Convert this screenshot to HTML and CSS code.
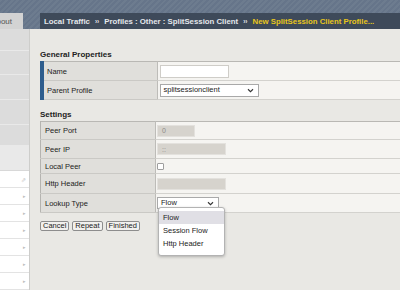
FILE: index.html
```html
<!DOCTYPE html>
<html lang="en">
  <head>
    <meta charset="UTF-8" />
    <title>New SplitSession Client Profile</title>
    <link rel="stylesheet" href="styles.css">
  </head>
  <body>
    <!-- top bar: nav tab + breadcrumb -->
    <div class="top">
      <div class="tab-about"><span>About</span></div>
      <div class="crumbs">
        <span>Local Traffic</span><span class="sep">&rsaquo;&rsaquo;</span><span>Profiles : Other : SplitSession Client</span><span class="sep">&rsaquo;&rsaquo;</span><span class="current">New SplitSession Client Profile...</span>
      </div>
    </div>

    <div class="main">
      <!-- left menu -->
      <div class="side">
        <div class="blk h23"></div>
        <div class="blk h25"></div>
        <div class="blk h26"></div>
        <div class="blk h25"></div>
        <div class="blk h22"></div>
        <div class="blk light"></div>
        <ul class="menu">
          <li><span class="ext">&#8663;</span></li>
          <li><span>&#9656;</span></li>
          <li><span>&#9656;</span></li>
          <li><span>&#9656;</span></li>
          <li><span>&#9656;</span></li>
          <li><span>&#9656;</span></li>
          <li><span>&#9656;</span></li>
        </ul>
      </div>

      <!-- form -->
      <div class="content">
        <h3>General Properties</h3>
        <table class="props general">
          <tr>
            <th>Name</th>
            <td><span class="txt name"></span></td>
          </tr>
          <tr>
            <th>Parent Profile</th>
            <td>
              <span class="sel parent">splitsessionclient
                <svg viewBox="0 0 8 6" width="7" height="5"><path d="M1 1.5 L4 4.5 L7 1.5" fill="none" stroke="#333" stroke-width="1.3"/></svg>
              </span>
            </td>
          </tr>
        </table>

        <h3 class="second">Settings</h3>
        <table class="props settings">
          <tr class="r18">
            <th>Peer Port</th>
            <td><span class="txt off short">0</span></td>
          </tr>
          <tr class="r19">
            <th>Peer IP</th>
            <td><span class="txt off">::</span></td>
          </tr>
          <tr class="r15">
            <th>Local Peer</th>
            <td><span class="check"></span></td>
          </tr>
          <tr class="r20">
            <th>Http Header</th>
            <td><span class="txt off"></span></td>
          </tr>
          <tr class="r19">
            <th>Lookup Type</th>
            <td>
              <div class="pick">
                <span class="sel lookup">Flow
                  <svg viewBox="0 0 8 6" width="7" height="5"><path d="M1 1.5 L4 4.5 L7 1.5" fill="none" stroke="#333" stroke-width="1.3"/></svg>
                </span>
                <ul class="drop">
                  <li class="on">Flow</li>
                  <li>Session Flow</li>
                  <li>Http Header</li>
                </ul>
              </div>
            </td>
          </tr>
        </table>

        <div class="buttons">
          <button>Cancel</button>
          <button>Repeat</button>
          <button>Finished</button>
        </div>
      </div>
    </div>
  </body>
</html>
```

FILE: styles.css
```css
/* reset */
* {
  margin: 0;
  padding: 0;
  box-sizing: border-box;
}

body {
  width: 400px;
  height: 290px;
  overflow: hidden;
  font-family: "Liberation Sans", Arial, sans-serif;
  font-size: 7.5px;
  color: #222;
  background-color: #e9e8e4;
}

ul {
  list-style-type: none;
}

/* top bar */
.top {
  height: 29px;
  padding-top: 13px;
  display: flex;
  background: repeating-linear-gradient(135deg, #6d7c8f 0 2px, #66758a 2px 4px);
}
.tab-about {
  width: 23px;
  height: 16px;
  padding-right: 11px;
  display: flex;
  align-items: center;
  justify-content: flex-end;
  overflow: hidden;
  background-color: #d3d3d3;
  color: #555;
  font-size: 8px;
  white-space: nowrap;
}
.crumbs {
  flex: 1;
  margin-left: 17px;
  height: 16px;
  padding-left: 4px;
  display: flex;
  align-items: center;
  white-space: nowrap;
  background-color: #3e4a5a;
  color: #e4e7eb;
  font-weight: bold;
  font-size: 7.8px;
}
.crumbs .sep {
  font-size: 6.5px;
  margin: 0 5px;
}
.crumbs .current {
  color: #e8c61c;
}

/* main area */
.main {
  display: flex;
  height: 261px;
}

/* left menu */
.side {
  width: 30px;
  border-right: 1px solid #cdcdcb;
  display: flex;
  flex-direction: column;
}
.blk {
  background-color: #dcdcdc;
  border-bottom: 1px solid #e9e9e9;
}
.h23 { height: 23px; }
.h25 { height: 25px; }
.h26 { height: 26px; }
.h22 { height: 22px; }
.blk.light {
  height: 26px;
  background-color: #e9e9e9;
  border-bottom: 1px solid #d8d8d8;
}
.menu {
  flex: 1;
  background-color: #fff;
}
.menu li {
  height: 17px;
  border-bottom: 1px solid #e3e3e3;
  display: flex;
  align-items: center;
  justify-content: flex-end;
  padding-right: 3px;
  color: #bdbdbd;
  font-size: 5px;
}
.menu li .ext {
  font-size: 6px;
}

/* form */
.content {
  flex: 1;
  padding: 21px 0 0 10px;
}
h3 {
  font-size: 8px;
  height: 10px;
  line-height: 10px;
  margin-bottom: 1px;
  color: #222;
}
h3.second {
  margin-top: 10px;
}

.props {
  width: 100%;
  border-collapse: collapse;
  border-top: 1px solid #b9b8b4;
  border-bottom: 1px solid #b9b8b4;
}
.props tr {
  height: 19px;
}
.props th {
  text-align: left;
  font-weight: normal;
  background-color: #e0dfdb;
  border-bottom: 1px solid #cac9c5;
  border-right: 1px solid #bdbcb8;
  color: #222;
}
.props td {
  background-color: #f5f4f1;
  border-bottom: 1px solid #d3d2ce;
  padding-left: 2px;
  line-height: 1;
}

.general th {
  width: 115px;
  border-left: 4px solid #2e5d8d;
  padding-left: 3px;
}
.settings th {
  width: 115px;
  border-left: 1px solid #b5b4b0;
  padding-left: 4px;
}
.settings td {
  padding-left: 1px;
}
.r18 { height: 18px !important; }
.r15 { height: 15px !important; }
.r20 { height: 20px !important; }

/* inputs */
.txt {
  display: inline-flex;
  align-items: center;
  vertical-align: middle;
  width: 69px;
  height: 13px;
  padding-left: 4px;
  background-color: #fff;
  border: 1px solid #cfcdc8;
  font-size: 7px;
}
.txt.off {
  height: 12px;
  background-color: #d6d3cd;
  border-color: #e3e1dd;
  color: #8c8a86;
}
.txt.short {
  width: 38px;
}
.check {
  display: inline-block;
  vertical-align: middle;
  width: 7px;
  height: 7px;
  background-color: #fff;
  border: 1px solid #9e9e9e;
  border-radius: 1px;
}
.sel {
  display: inline-flex;
  align-items: center;
  justify-content: space-between;
  vertical-align: middle;
  height: 13px;
  padding: 0 4px 0 3px;
  background-color: #fff;
  border: 1px solid #a9a9a9;
  color: #222;
  font-size: 7.5px;
}
.sel.parent {
  width: 99px;
}
.sel.lookup {
  width: 62px;
  height: 12px;
}

/* open dropdown */
.pick {
  position: relative;
  display: inline-block;
  vertical-align: middle;
}
.drop {
  position: absolute;
  left: 1px;
  top: 10px;
  width: 67px;
  padding: 3px 0 5px;
  background-color: #fff;
  border: 1px solid #b3b3b3;
  border-radius: 3px;
  box-shadow: 0 1px 3px rgba(0, 0, 0, 0.25);
  z-index: 2;
}
.drop li {
  height: 13px;
  line-height: 13px;
  padding-left: 4px;
  color: #222;
}
.drop li.on {
  background-color: #e0dfe5;
}

/* buttons */
.buttons {
  margin-top: 8px;
  display: flex;
  gap: 3px;
}
.buttons button {
  height: 10px;
  padding: 0 2px;
  font-family: inherit;
  font-size: 7.5px;
  line-height: 8px;
  color: #222;
  background-color: #f1f0ee;
  border: 1px solid #8d8d8d;
  border-radius: 2px;
}
```
